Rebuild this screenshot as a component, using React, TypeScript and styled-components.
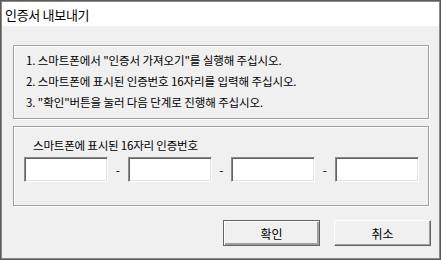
import React from 'react'
import styled, { createGlobalStyle } from 'styled-components'

const GlobalStyle = createGlobalStyle`
  html, body {
    margin: 0;
    padding: 0;
    background: #f0f0f0;
  }
  body {
    font-family: "Noto Sans CJK KR", "Noto Sans", sans-serif;
    color: #000;
  }
`

const Window = styled.div`
  width: 441px;
  height: 260px;
  box-sizing: border-box;
  border: 1px solid #5a5a5a;
`

const Frame = styled.div`
  height: 100%;
  box-sizing: border-box;
  border: 1px solid #8a8a8a;
  display: flex;
  flex-direction: column;
  background: #f0f0f0;
`

const TitleBar = styled.div`
  height: 24px;
  background: #fff;
  display: flex;
  align-items: center;
  padding-left: 3px;
  font-size: 13px;
  letter-spacing: -0.3px;
`

const Body = styled.div`
  flex: 1;
  display: flex;
  flex-direction: column;
  padding: 19px 0 0 11px;
`

const Panel = styled.div<{ $height: number; $gap?: number }>`
  width: 416px;
  height: ${p => p.$height}px;
  box-sizing: border-box;
  margin-top: ${p => p.$gap ?? 0}px;
  border: 1px solid #a0a0a0;
  box-shadow: 1px 1px 0 #fff, inset 1px 1px 0 #fff;
`

const Steps = styled.ol`
  list-style: none;
  margin: 0;
  padding: 4px 0 0 12px;
  font-size: 11.5px;
  line-height: 21px;
  letter-spacing: -0.1px;
`

const Label = styled.div`
  font-size: 11.5px;
  line-height: 16px;
  letter-spacing: -0.2px;
  margin: 10px 0 4px 19px;
`

const CodeRow = styled.div`
  display: flex;
  align-items: center;
  padding-left: 10px;
`

const CodeInput = styled.input`
  width: 84px;
  height: 25px;
  box-sizing: border-box;
  margin: 0;
  padding: 0 3px;
  background: #fff;
  border: 1px solid;
  border-color: #8a8a8a #fff #fff #8a8a8a;
  box-shadow: inset 1px 1px 0 #646464, inset -1px -1px 0 #e3e3e3;
  outline: none;
`

const Dash = styled.span`
  width: 19.5px;
  text-align: center;
  font-size: 12px;
`

const Footer = styled.div`
  display: flex;
  justify-content: flex-end;
  gap: 14px;
  margin-top: 14px;
  padding-right: 8px;
`

const Button = styled.button<{ $default?: boolean }>`
  width: 97px;
  height: 26px;
  box-sizing: border-box;
  margin: 0;
  padding: 0;
  font-family: inherit;
  font-size: 12px;
  color: #000;
  background: #f0f0f0;
  border: 1px solid;
  border-color: ${p => (p.$default ? '#646464' : '#fff #646464 #646464 #fff')};
  box-shadow: ${p =>
    p.$default
      ? 'inset 1px 1px 0 #fff, inset -2px -2px 0 #a0a0a0'
      : 'inset -1px -1px 0 #a0a0a0'};
`

const steps = [
  '1. 스마트폰에서 "인증서 가져오기"를 실행해 주십시오.',
  '2. 스마트폰에 표시된 인증번호 16자리를 입력해 주십시오.',
  '3. "확인"버튼을 눌러 다음 단계로 진행해 주십시오.',
]

export default function App() {
  return (
    <>
      <GlobalStyle />
      <Window>
        <Frame>
          <TitleBar>인증서 내보내기</TitleBar>
          <Body>
            <Panel $height={74}>
              <Steps>
                {steps.map(s => (
                  <li key={s}>{s}</li>
                ))}
              </Steps>
            </Panel>
            <Panel $height={80} $gap={7}>
              <Label>스마트폰에 표시된 16자리 인증번호</Label>
              <CodeRow>
                {[0, 1, 2, 3].map(i => (
                  <React.Fragment key={i}>
                    {i > 0 && <Dash>-</Dash>}
                    <CodeInput maxLength={4} />
                  </React.Fragment>
                ))}
              </CodeRow>
            </Panel>
            <Footer>
              <Button $default>확인</Button>
              <Button>취소</Button>
            </Footer>
          </Body>
        </Frame>
      </Window>
    </>
  )
}
